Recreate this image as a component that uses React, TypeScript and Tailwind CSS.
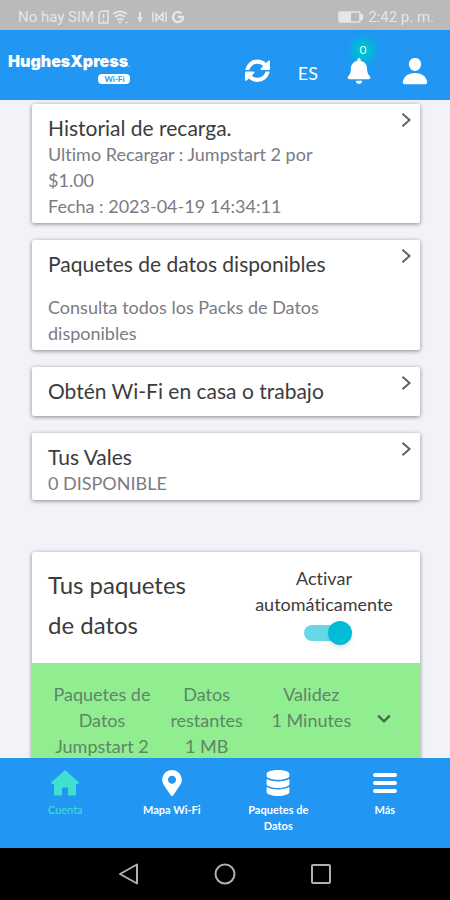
import { useState } from 'react';
import type { ReactNode } from 'react';
import { FaBell, FaDatabase, FaMapMarkerAlt } from 'react-icons/fa';
import { IoPerson } from 'react-icons/io5';

interface InfoCard {
  id: number;
  title: string;
  lines: string[];
  spaced?: boolean;
}

interface NavItem {
  label: string;
  icon: ReactNode;
}

const cards: InfoCard[] = [
  {
    id: 1,
    title: 'Historial de recarga.',
    lines: ['Ultimo Recargar : Jumpstart 2 por $1.00', 'Fecha : 2023-04-19 14:34:11'],
  },
  {
    id: 2,
    title: 'Paquetes de datos disponibles',
    lines: ['Consulta todos los Packs de Datos disponibles'],
    spaced: true,
  },
  { id: 3, title: 'Obtén Wi-Fi en casa o trabajo', lines: [] },
  { id: 4, title: 'Tus Vales', lines: ['0 DISPONIBLE'] },
];

const navItems: NavItem[] = [
  {
    label: 'Cuenta',
    icon: (
      <svg viewBox="0 0 28 26" className="h-[26px] w-7" fill="currentColor" aria-hidden="true">
        <path d="M14 0 28 12.500 27 14H25V24.500Q25 25.500 24 25.500H17V18.500Q17 17.500 16 17.500H12Q11 17.500 11 18.500V25.500H4Q3 25.500 3 24.500V14H1L0 12.500Z" />
      </svg>
    ),
  },
  { label: 'Mapa Wi-Fi', icon: <FaMapMarkerAlt className="h-[26px] w-6" /> },
  { label: 'Paquetes de Datos', icon: <FaDatabase className="h-[26px] w-6" /> },
  {
    label: 'Más',
    icon: (
      <svg viewBox="0 0 24 26" className="h-[26px] w-6" aria-hidden="true">
        <path d="M2 5H22M2 13H22M2 21H22" stroke="currentColor" strokeWidth="4" strokeLinecap="round" />
      </svg>
    ),
  },
];

const StatusBar = () => (
  <div className="flex h-[30px] shrink-0 items-center justify-between bg-[#bababa] pt-1 pr-4 pl-[18px] font-[Roboto,sans-serif] text-[15px] text-[#e6e6e6]">
    <div className="flex items-center gap-1">
      <span>No hay SIM</span>
      <svg viewBox="0 0 88 16" className="h-4 w-[88px]" fill="none" stroke="currentColor" aria-hidden="true">
        <path d="M1 4 4 2H10V14H1ZM5.500 5V9M5.500 11V12.500" strokeWidth="1.500" />
        <path d="M15 5Q22 0 29 5M17 8Q22 4 27 8M19 11Q22 9 25 11" strokeWidth="1.800" />
        <path d="M20 12.500H24L22 15ZM27 13H30L28.500 15Z" fill="currentColor" stroke="none" />
        <path d="M42 3V13" strokeWidth="2" />
        <path d="M39 8H45L42 12.500Z" fill="currentColor" stroke="none" />
        <path d="M55 3V13M68 3V13M58 5 65 12V4L58 12Z" strokeWidth="1.500" />
        <path d="M83.500 4.500A5 5 0 1 0 85 8H80" strokeWidth="2.500" />
      </svg>
    </div>
    <div className="flex items-center gap-1">
      <svg viewBox="0 0 26 12" className="h-3 w-[26px]" fill="none" stroke="currentColor" aria-hidden="true">
        <rect x="1" y="1" width="21" height="10" rx="1" strokeWidth="1.500" />
        <path d="M1 1H13V11H1ZM22 3H25V9H22Z" fill="currentColor" stroke="none" />
      </svg>
      <span>2:42 p. m.</span>
    </div>
  </div>
);

const RefreshIcon = () => (
  <svg viewBox="0 128 1536 1536" className="size-[25px]" fill="currentColor" aria-hidden="true">
    <path d="M1511 928q0 5-1 7-64 268-268 434.500t-478 166.500q-146 0-282.500-55t-243.500-157l-129 129q-19 19-45 19t-45-19-19-45v-448q0-26 19-45t45-19h448q26 0 45 19t19 45-19 45l-137 137q71 66 161 102t187 36q134 0 250-65t186-179q11-17 53-117 8-23 30-23h192q13 0 22.500 9.500t9.500 22.500zm25-640v448q0 26-19 45t-45 19h-448q-26 0-45-19t-19-45 19-45l138-138q-148-137-349-137-134 0-250 65t-186 179q-11 17-53 117-8 23-30 23h-199q-13 0-22.500-9.500t-9.500-22.500v-7q65-268 270-434.500t480-166.500q146 0 284 55.500t245 156.500l130-129q19-19 45-19t45 19 19 45z" />
  </svg>
);

const Header = () => (
  <header className="flex h-[70px] shrink-0 items-center justify-between bg-[#2196f3] pr-5 pl-2 text-white">
    <a href="#inicio" className="flex flex-col items-end pt-1 leading-none">
      <span className="font-[Inter,sans-serif] text-base leading-5 font-black">
        HughesXpress<span className="text-[8px] font-normal">.</span>
      </span>
      <span className="rounded bg-white px-1.5 text-[8px] leading-[10px] font-bold text-[#2196f3]">
        Wi-Fi
      </span>
    </a>
    <div className="mt-3 flex items-center gap-7">
      <button type="button" aria-label="Actualizar">
        <RefreshIcon />
      </button>
      <button type="button" className="pt-1 text-lg">
        ES
      </button>
      <button type="button" aria-label="Notificaciones" className="relative">
        <span className="absolute -top-4 left-1/2 flex size-4 -translate-x-1 items-center justify-center rounded-full bg-[#00bcd4] text-xs shadow-[0_0_6px_4px_#00bcd4]">
          0
        </span>
        <FaBell size={26} className="relative" />
      </button>
      <button type="button" aria-label="Perfil">
        <IoPerson size={30} />
      </button>
    </div>
  </header>
);

const App = () => {
  const [autoActivate, setAutoActivate] = useState(true);
  const [activeTab, setActiveTab] = useState('Cuenta');

  return (
    <div className="flex h-screen flex-col overflow-hidden bg-[#f1f3f8] font-[Lato,sans-serif] [font-variant-ligatures:none]">
      <StatusBar />
      <Header />

      <main className="min-h-0 flex-1 overflow-y-auto pt-1 pr-[30px] pl-8 [scrollbar-width:none]">
        <div className="flex flex-col gap-[17px]">
          {cards.map((card) => (
            <a
              key={card.id}
              href="#detalle"
              className="flex items-start justify-between rounded-xs bg-white pt-2 pr-2 pb-1 pl-4 shadow-[0_1px_4px_rgba(0,0,0,0.45)]"
            >
              <div className={card.lines.length ? 'max-w-[300px] pt-[3px]' : 'pt-[3px] pb-2'}>
                <h2 className={`text-[21px] leading-[26px] text-[#3c3c3c] ${card.spaced ? 'mb-[17px]' : ''}`}>
                  {card.title}
                </h2>
                {card.lines.map((line) => (
                  <p key={line} className="text-lg leading-[26px] text-[#7b7b82]">
                    {line}
                  </p>
                ))}
              </div>
              <svg viewBox="0 0 12 18" className="h-4 w-3 shrink-0" fill="none" aria-hidden="true">
                <path d="M2 2 10 9 2 16" stroke="#5f5f68" strokeWidth="2.200" />
              </svg>
            </a>
          ))}
        </div>

        {/* Data packs */}
        <section className="mt-[52px] rounded-xs bg-white shadow-[0_1px_4px_rgba(0,0,0,0.45)]">
          <div className="flex justify-between pt-[13px] pr-2 pb-[18px] pl-4">
            <h2 className="w-36 text-2xl leading-10 text-[#3c3c3c]">Tus paquetes de datos</h2>
            <label className="flex w-44 flex-col items-center text-center text-lg leading-[26px] text-[#3c3c3c]">
              Activar automáticamente
              <input
                type="checkbox"
                role="switch"
                checked={autoActivate}
                onChange={(e) => setAutoActivate(e.target.checked)}
                className="relative mt-2 h-4 w-10 appearance-none rounded-full bg-gray-300 before:absolute before:-top-1 before:left-0 before:size-6 before:rounded-full before:bg-white before:shadow-md checked:bg-[#66d7e5] checked:before:left-6 checked:before:bg-[#00bcd4]"
              />
            </label>
          </div>
          <div className="flex items-start justify-between bg-[#90ee90] pt-[18px] pr-7 pb-6 pl-[14px] text-center text-lg leading-[26px] text-[#5f8568]">
            <div className="w-28">
              <p>Paquetes de Datos</p>
              <p>Jumpstart 2</p>
            </div>
            <div className="w-20">
              <p>Datos restantes</p>
              <p>1 MB</p>
            </div>
            <div className="w-28">
              <p>Validez</p>
              <p>1 Minutes</p>
            </div>
            <button type="button" aria-label="Ver detalles" className="mt-8">
              <svg viewBox="0 0 14 10" className="h-3 w-4" fill="none" aria-hidden="true">
                <path d="M2 2 7 7 12 2" stroke="#48694f" strokeWidth="2" />
              </svg>
            </button>
          </div>
        </section>
      </main>

      <nav className="grid h-[90px] shrink-0 grid-cols-4 bg-[#2196f3] px-3 pt-3">
        {navItems.map((item) => (
          <button
            key={item.label}
            type="button"
            onClick={() => setActiveTab(item.label)}
            className={`flex flex-col items-center gap-1.5 text-[11px] leading-4 ${
              activeTab === item.label ? 'text-[#40e0d0]' : 'font-bold text-white'
            }`}
          >
            {item.icon}
            <span className="max-w-[70px]">{item.label}</span>
          </button>
        ))}
      </nav>

      <div className="flex h-[52px] shrink-0 items-center justify-center gap-[74px] bg-black text-[#b0b0b0]">
        <button type="button" aria-label="Atrás">
          <svg viewBox="0 0 22 22" className="size-[22px]" fill="none" aria-hidden="true">
            <path d="M19 1.500V20.500L2 11Z" stroke="currentColor" strokeWidth="2" strokeLinejoin="round" />
          </svg>
        </button>
        <button type="button" aria-label="Inicio">
          <svg viewBox="0 0 22 22" className="size-[22px]" fill="none" aria-hidden="true">
            <circle cx="11" cy="11" r="9.500" stroke="currentColor" strokeWidth="2" />
          </svg>
        </button>
        <button type="button" aria-label="Recientes">
          <svg viewBox="0 0 22 22" className="size-[22px]" fill="none" aria-hidden="true">
            <rect x="2" y="2" width="18" height="18" rx="1" stroke="currentColor" strokeWidth="2" />
          </svg>
        </button>
      </div>
    </div>
  );
};

export default App;
